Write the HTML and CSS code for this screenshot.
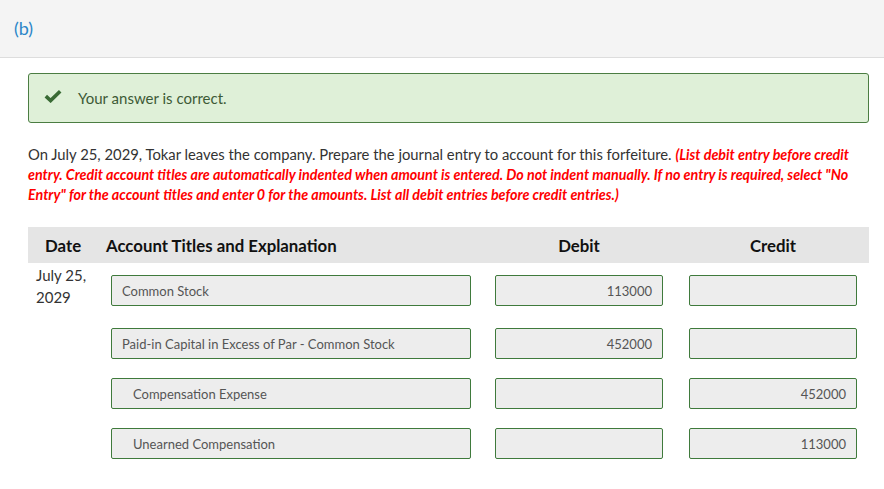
FILE: index.html
```html
<!DOCTYPE html>
<html>
<head>
<meta charset="utf-8">
<link rel="stylesheet" href="styles.css">
</head>
<body>
<div class="band"><span class="part">(b)</span></div>
<div class="main">
  <div class="alert">
    <svg class="check" width="18" height="14" viewBox="0 0 18 14"><path d="M1.8 7.2 L6.6 11.6 L16.2 2.2" fill="none" stroke="#3a6b35" stroke-width="3.6" stroke-linejoin="miter"/></svg>
    <span class="alert-text">Your answer is correct.</span>
  </div>
  <p class="question">On July 25, 2029, Tokar leaves the company. Prepare the journal entry to account for this forfeiture. <em class="note">(List debit entry before credit entry. Credit account titles are automatically indented when amount is entered. Do not indent manually. If no entry is required, select "No Entry" for the account titles and enter 0 for the amounts. List all debit entries before credit entries.)</em></p>
  <div class="thead">
    <div class="th th-date">Date</div>
    <div class="th th-acct">Account Titles and Explanation</div>
    <div class="th th-num">Debit</div>
    <div class="th th-num">Credit</div>
  </div>
  <div class="row first">
    <div class="date">July 25,<br>2029</div>
    <div class="cell"><div class="field acct">Common Stock</div></div>
    <div class="cell"><div class="field num">113000</div></div>
    <div class="cell"><div class="field num"></div></div>
  </div>
  <div class="row">
    <div class="date"></div>
    <div class="cell"><div class="field acct">Paid-in Capital in Excess of Par - Common Stock</div></div>
    <div class="cell"><div class="field num">452000</div></div>
    <div class="cell"><div class="field num"></div></div>
  </div>
  <div class="row">
    <div class="date"></div>
    <div class="cell"><div class="field acct indent">Compensation Expense</div></div>
    <div class="cell"><div class="field num"></div></div>
    <div class="cell"><div class="field num">452000</div></div>
  </div>
  <div class="row">
    <div class="date"></div>
    <div class="cell"><div class="field acct indent">Unearned Compensation</div></div>
    <div class="cell"><div class="field num"></div></div>
    <div class="cell"><div class="field num">113000</div></div>
  </div>
</div>
</body>
</html>
```
FILE: styles.css
```css
* { box-sizing: border-box; }
html, body { margin: 0; padding: 0; background: #ffffff; }
body { font-family: Lato, "Open Sans", sans-serif; color: #333333; }

.band {
  height: 58px;
  background: #f4f4f4;
  border-bottom: 1px solid #dddddd;
  display: flex;
  align-items: center;
  padding-left: 14px;
  padding-bottom: 1px;
}
.part { font-size: 18px; color: #2a86c8; }

.main { width: 841px; margin-left: 28px; }

.alert {
  margin-top: 15px;
  height: 50px;
  background: #dff0d8;
  border: 1px solid #4b7d42;
  border-radius: 3px;
  display: flex;
  align-items: center;
  padding-left: 15px;
}
.check { display: block; margin-right: 16px; margin-top: -4px; }
.alert-text { font-size: 15px; color: #3d5a36; }

.question {
  margin: 21px 0 0 0;
  font-size: 14.8px;
  line-height: 20px;
  color: #333333;
}
.note { font-weight: bold; color: #ff0000; font-style: italic; font-size: 14.3px; line-height: 16px; }

.thead {
  margin-top: 23px;
  height: 36px;
  background: #e5e5e5;
  display: grid;
  grid-template-columns: 78px 389px 194px 180px;
  align-items: center;
}
.th { font-size: 16.8px; font-weight: bold; color: #111111; }
.th-date { padding-left: 17px; }
.th-num { width: 168px; text-align: center; }

.row {
  display: grid;
  grid-template-columns: 83px 384px 194px 180px;
  align-items: start;
}
.date {
  padding: 1px 0 8px 8px;
  font-size: 15px;
  line-height: 22px;
  color: #333333;
}
.cell { padding: 12px 0 7px 0; }
.first .date { min-height: 53px; }
.field {
  height: 31px;
  background: #ededed;
  border: 1px solid #3f7a3c;
  border-radius: 2px;
  font-size: 13px;
  color: #555555;
  display: flex;
  align-items: center;
  white-space: nowrap;
}
.acct { width: 360px; padding-left: 10px; }
.indent { padding-left: 21px; }
.num { width: 168px; justify-content: flex-end; padding-right: 10px; }
```
